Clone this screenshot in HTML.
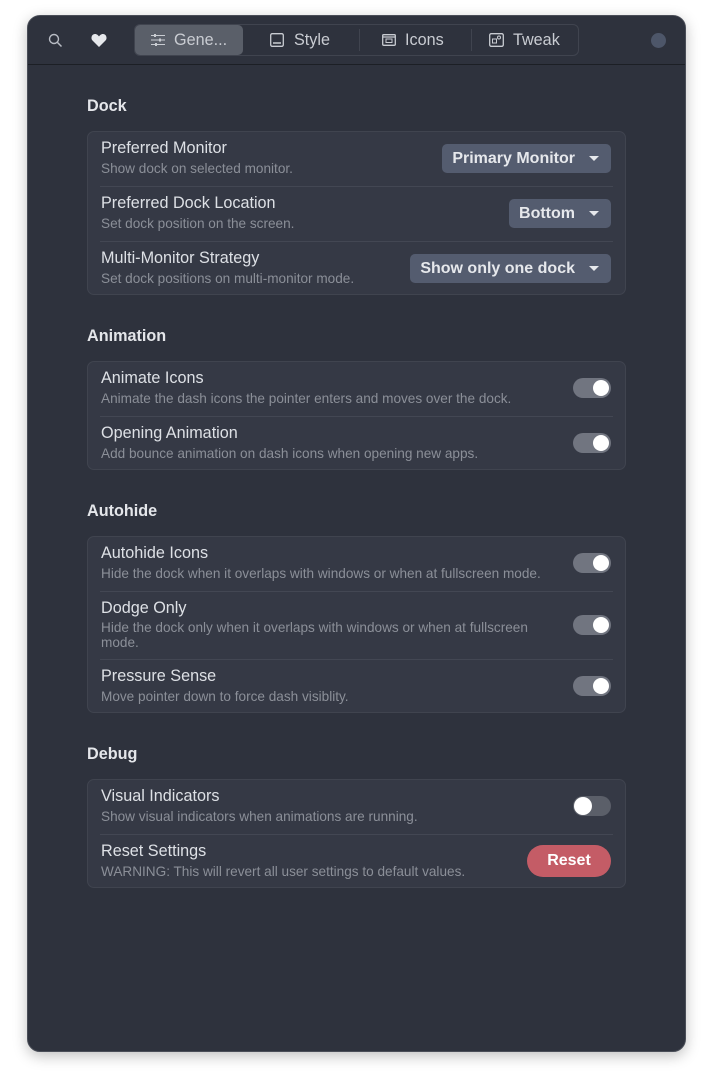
<!DOCTYPE html>
<html><head><meta charset="utf-8"><style>
*{box-sizing:border-box;margin:0;padding:0}
body{width:713px;height:1091px;background:#fff;font-family:"Liberation Sans",sans-serif;position:relative;overflow:hidden}
.win{position:absolute;left:27px;top:15px;width:659px;height:1037px;background:#2e323d;border-radius:13px;border:1px solid #4a4e58;box-shadow:0 4px 14px rgba(0,0,0,.25);overflow:hidden}
.hdr{position:absolute;left:0;top:0;right:0;height:49px;border-bottom:1px solid #1c1f25;background:#2e323d}
.tabs{position:absolute;left:106px;top:8px;width:445px;height:32px;border:1px solid #40444f;border-radius:6px}
.tab{position:absolute;top:0;height:30px;line-height:31px;color:#c9ccd2;font-size:16.2px}
.act{left:0;width:108px;background:#5a5f69;border-radius:5px}
.sep{position:absolute;top:4px;width:1px;height:22px;background:#40444f}
.sec{position:absolute;left:59px;color:#e4e6ea;font-weight:bold;font-size:16.2px}
.card{position:absolute;left:59px;width:539px;background:#353945;border:1px solid #40444f;border-radius:7px}
.row{position:relative;border-top:1px solid #434753;margin:0 12px;height:55px}
.row:first-child{border-top:none;height:54px}
.row:last-child{height:53px}
.t{position:absolute;left:1px;top:7px;color:#dde0e5;font-size:16.2px;white-space:nowrap}
.s{position:absolute;left:1px;top:29px;color:#8b8f98;font-size:13.6px;white-space:nowrap}
.dd{position:absolute;right:2px;top:12px;height:29px;background:#545c6f;border-radius:5px;color:#e6e8ec;font-weight:bold;font-size:16px;line-height:29px;padding:0 36px 0 10px}
.dd:after{content:"";position:absolute;right:12px;top:12px;border-left:5px solid transparent;border-right:5px solid transparent;border-top:5px solid #e6e8ec}
.tg{position:absolute;right:2px;top:16px;width:38px;height:20px;border-radius:10px;background:#717580}
.tg:after{content:"";position:absolute;top:2px;left:20px;width:16px;height:16px;border-radius:50%;background:#fff}
.tg.off{background:#5b5f69}.tg.off:after{left:1px;width:18px;height:18px;top:1px}
</style></head><body>
<div class="win">
<div class="hdr">
<svg style="position:absolute;left:20px;top:17px" width="15" height="15" viewBox="0 0 15 15"><circle cx="6" cy="6" r="4.5" fill="none" stroke="#b8bcc4" stroke-width="1.4"/><path d="M9.5 9.5L13.5 13.5" stroke="#b8bcc4" stroke-width="1.5"/></svg>
<svg style="position:absolute;left:63px;top:17px" width="16" height="14" viewBox="0 0 16 14"><path d="M8 14L1.5 7.5C-.5 5.5.5 1 4 1c2 0 3 1.2 4 2.4C9 2.2 10 1 12 1c3.5 0 4.5 4.5 2.5 6.5z" fill="#e6e8ec"/></svg>
<div class="tabs">
<div class="tab act"><svg style="position:absolute;left:16px;top:9px" width="14" height="12" viewBox="0 0 14 12"><path d="M0 1.5h14M0 6h14M0 10.5h14" stroke="#c9ccd2" stroke-width="1"/><rect x="3" y="0" width="2" height="3" fill="#c9ccd2"/><rect x="8" y="4.5" width="2" height="3" fill="#c9ccd2"/><rect x="4" y="9" width="2" height="3" fill="#c9ccd2"/></svg><span style="position:absolute;left:39px">Gene...</span></div>
<div class="tab" style="left:135px"><svg style="position:absolute;left:0;top:8px" width="14" height="14" viewBox="0 0 14 14"><rect x=".7" y=".7" width="12.6" height="12.6" rx="1.5" fill="none" stroke="#c9ccd2" stroke-width="1.3"/><path d="M3 10h8" stroke="#c9ccd2" stroke-width="1.5"/></svg><span style="position:absolute;left:24px">Style</span></div>
<div class="sep" style="left:224px"></div>
<div class="tab" style="left:247px"><svg style="position:absolute;left:0;top:9px" width="14" height="12" viewBox="0 0 14 12"><rect x=".7" y=".7" width="12.6" height="10.6" rx="1" fill="none" stroke="#c9ccd2" stroke-width="1.3"/><path d="M1 3h12" stroke="#c9ccd2" stroke-width="1.3"/><rect x="4" y="5" width="6" height="3.5" fill="none" stroke="#c9ccd2" stroke-width="1"/></svg><span style="position:absolute;left:23px">Icons</span></div>
<div class="sep" style="left:336px"></div>
<div class="tab" style="left:354px"><svg style="position:absolute;left:0;top:8px" width="15" height="14" viewBox="0 0 15 14"><rect x=".7" y=".7" width="13.6" height="12.6" rx="1.5" fill="none" stroke="#c9ccd2" stroke-width="1.3"/><rect x="3.5" y="6" width="4" height="4" fill="none" stroke="#c9ccd2"/><circle cx="10" cy="4.5" r="1.5" fill="none" stroke="#c9ccd2"/></svg><span style="position:absolute;left:24px">Tweak</span></div>
</div>
<div style="position:absolute;left:623px;top:17px;width:15px;height:15px;border-radius:50%;background:#4d5669"></div>
</div>

<div class="sec" style="top:81px">Dock</div>
<div class="card" style="top:115px">
<div class="row"><div class="t">Preferred Monitor</div><div class="s">Show dock on selected monitor.</div><div class="dd">Primary Monitor</div></div>
<div class="row"><div class="t">Preferred Dock Location</div><div class="s">Set dock position on the screen.</div><div class="dd">Bottom</div></div>
<div class="row"><div class="t">Multi-Monitor Strategy</div><div class="s">Set dock positions on multi-monitor mode.</div><div class="dd">Show only one dock</div></div>
</div>

<div class="sec" style="top:311px">Animation</div>
<div class="card" style="top:345px">
<div class="row"><div class="t">Animate Icons</div><div class="s">Animate the dash icons the pointer enters and moves over the dock.</div><div class="tg"></div></div>
<div class="row"><div class="t">Opening Animation</div><div class="s">Add bounce animation on dash icons when opening new apps.</div><div class="tg"></div></div>
</div>

<div class="sec" style="top:486px">Autohide</div>
<div class="card" style="top:520px">
<div class="row"><div class="t">Autohide Icons</div><div class="s">Hide the dock when it overlaps with windows or when at fullscreen mode.</div><div class="tg"></div></div>
<div class="row" style="height:68px"><div class="t">Dodge Only</div><div class="s" style="top:28px;width:450px;line-height:15px;white-space:normal">Hide the dock only when it overlaps with windows or when at fullscreen mode.</div><div class="tg" style="top:23px"></div></div>
<div class="row"><div class="t">Pressure Sense</div><div class="s">Move pointer down to force dash visiblity.</div><div class="tg"></div></div>
</div>

<div class="sec" style="top:729px">Debug</div>
<div class="card" style="top:763px">
<div class="row"><div class="t">Visual Indicators</div><div class="s">Show visual indicators when animations are running.</div><div class="tg off"></div></div>
<div class="row"><div class="t">Reset Settings</div><div class="s">WARNING: This will revert all user settings to default values.</div><div style="position:absolute;right:2px;top:10px;width:84px;height:32px;border-radius:16px;background:#c45c66;color:#fff;font-weight:bold;font-size:16px;text-align:center;line-height:32px">Reset</div></div>
</div>
</div>
</body></html>
